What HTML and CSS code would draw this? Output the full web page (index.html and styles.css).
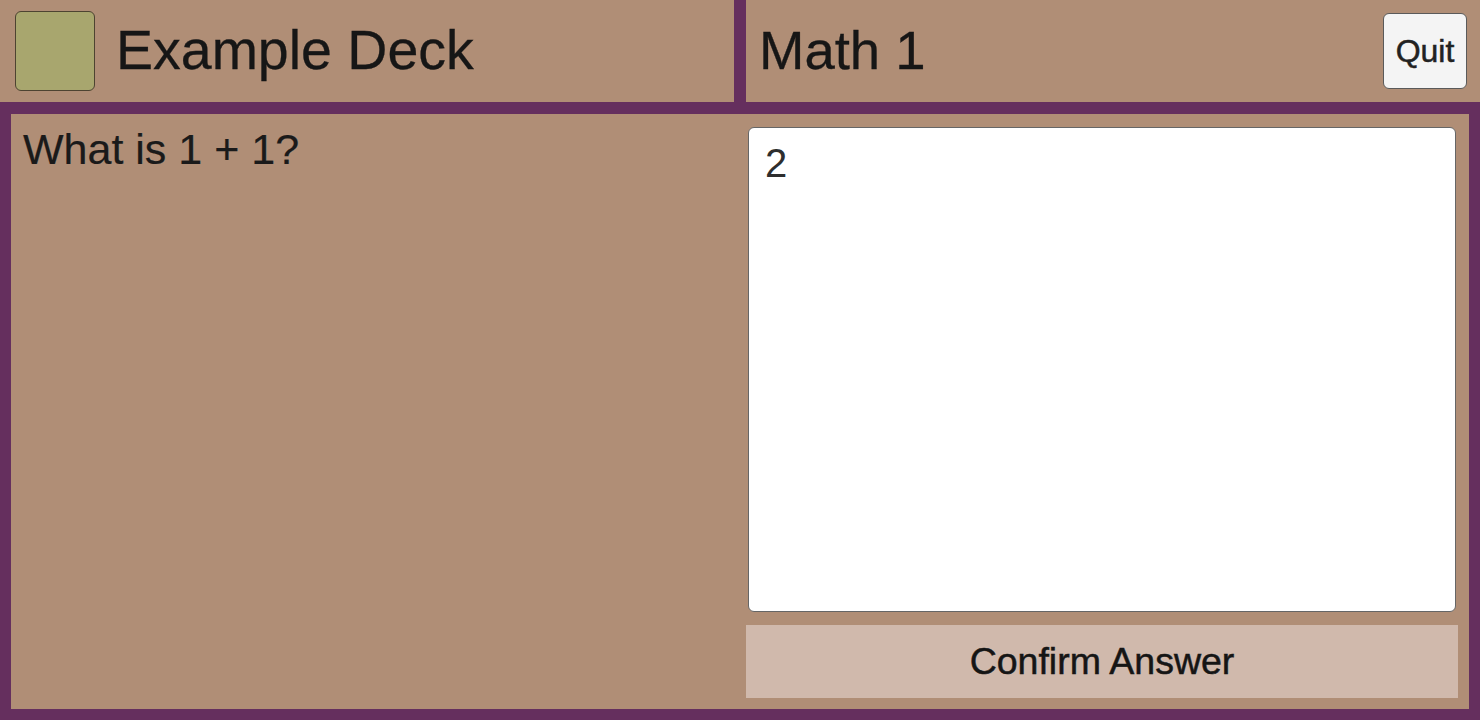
FILE: index.html
```html
<!DOCTYPE html>
<html lang="en">
<head>
<meta charset="utf-8">
<title>Example Deck - Math 1</title>
<link rel="stylesheet" href="styles.css">
</head>
<body>
<div class="app">
  <header class="header">
    <div class="deck-panel">
      <div class="deck-swatch"></div>
      <h1 class="deck-title">Example Deck</h1>
    </div>
    <div class="card-panel">
      <h2 class="card-title">Math 1</h2>
      <button class="quit-btn" type="button">Quit</button>
    </div>
  </header>
  <main class="main">
    <div class="question">What is 1 + 1?</div>
    <div class="answer-col">
      <textarea class="answer-input">2</textarea>
      <button class="confirm-btn" type="button">Confirm Answer</button>
    </div>
  </main>
</div>
</body>
</html>
```
FILE: styles.css
```css
* {
  box-sizing: border-box;
}

html, body {
  margin: 0;
  padding: 0;
}

body {
  background: #652f5e;
  font-family: "Liberation Sans", Arial, sans-serif;
  color: #1a1a1a;
}

.app {
  width: 1480px;
  height: 720px;
  display: flex;
  flex-direction: column;
}

.header {
  height: 102px;
  display: grid;
  grid-template-columns: 734px 1fr;
  column-gap: 12px;
  margin-bottom: 12px;
  flex: none;
}

.deck-panel {
  background: #b08e76;
  display: flex;
  align-items: center;
  padding-left: 15px;
  gap: 21px;
}

.deck-swatch {
  width: 80px;
  height: 80px;
  background: #a8a66e;
  border: 1px solid #4d4331;
  border-radius: 6px;
  flex: none;
}

.deck-title,
.card-title {
  margin: 0;
  font-weight: 400;
  line-height: 1.15;
  color: #161616;
  -webkit-text-stroke: 0.3px #161616;
}

.deck-title {
  font-size: 55.5px;
}

.card-title {
  font-size: 54.5px;
}

.card-panel {
  background: #b08e76;
  display: flex;
  align-items: center;
  justify-content: space-between;
  padding-left: 13px;
  padding-right: 13px;
}

.quit-btn {
  width: 84px;
  height: 76px;
  background: #f4f4f4;
  border: 1px solid #5a5a5a;
  border-radius: 6px;
  font-family: "Liberation Sans", Arial, sans-serif;
  font-size: 32px;
  color: #222;
  -webkit-text-stroke: 0.5px #222;
  padding: 0;
}

.main {
  flex: 1;
  margin: 0 11px 11px 11px;
  background: #b08e76;
  padding: 11px;
  display: grid;
  grid-template-columns: 1fr 1fr;
  column-gap: 12px;
  min-height: 0;
}

.question {
  font-size: 43px;
  line-height: 1.15;
  color: #1a1a1a;
  padding-left: 1px;
  -webkit-text-stroke: 0.2px #1a1a1a;
}

.answer-col {
  display: flex;
  flex-direction: column;
  gap: 11px;
  min-height: 0;
}

.answer-input {
  flex: 1;
  margin: 2px;
  resize: none;
  background: #ffffff;
  border: 1px solid #666;
  border-radius: 6px;
  padding: 12px 16px;
  font-family: "Liberation Sans", Arial, sans-serif;
  font-size: 40px;
  line-height: 1.15;
  color: #2e2e2e;
  outline: none;
}

.confirm-btn {
  height: 73px;
  flex: none;
  background: #d0b9ac;
  border: none;
  border-radius: 0;
  font-family: "Liberation Sans", Arial, sans-serif;
  font-size: 37.5px;
  color: #151515;
  -webkit-text-stroke: 0.5px #151515;
  padding: 0;
}
```
